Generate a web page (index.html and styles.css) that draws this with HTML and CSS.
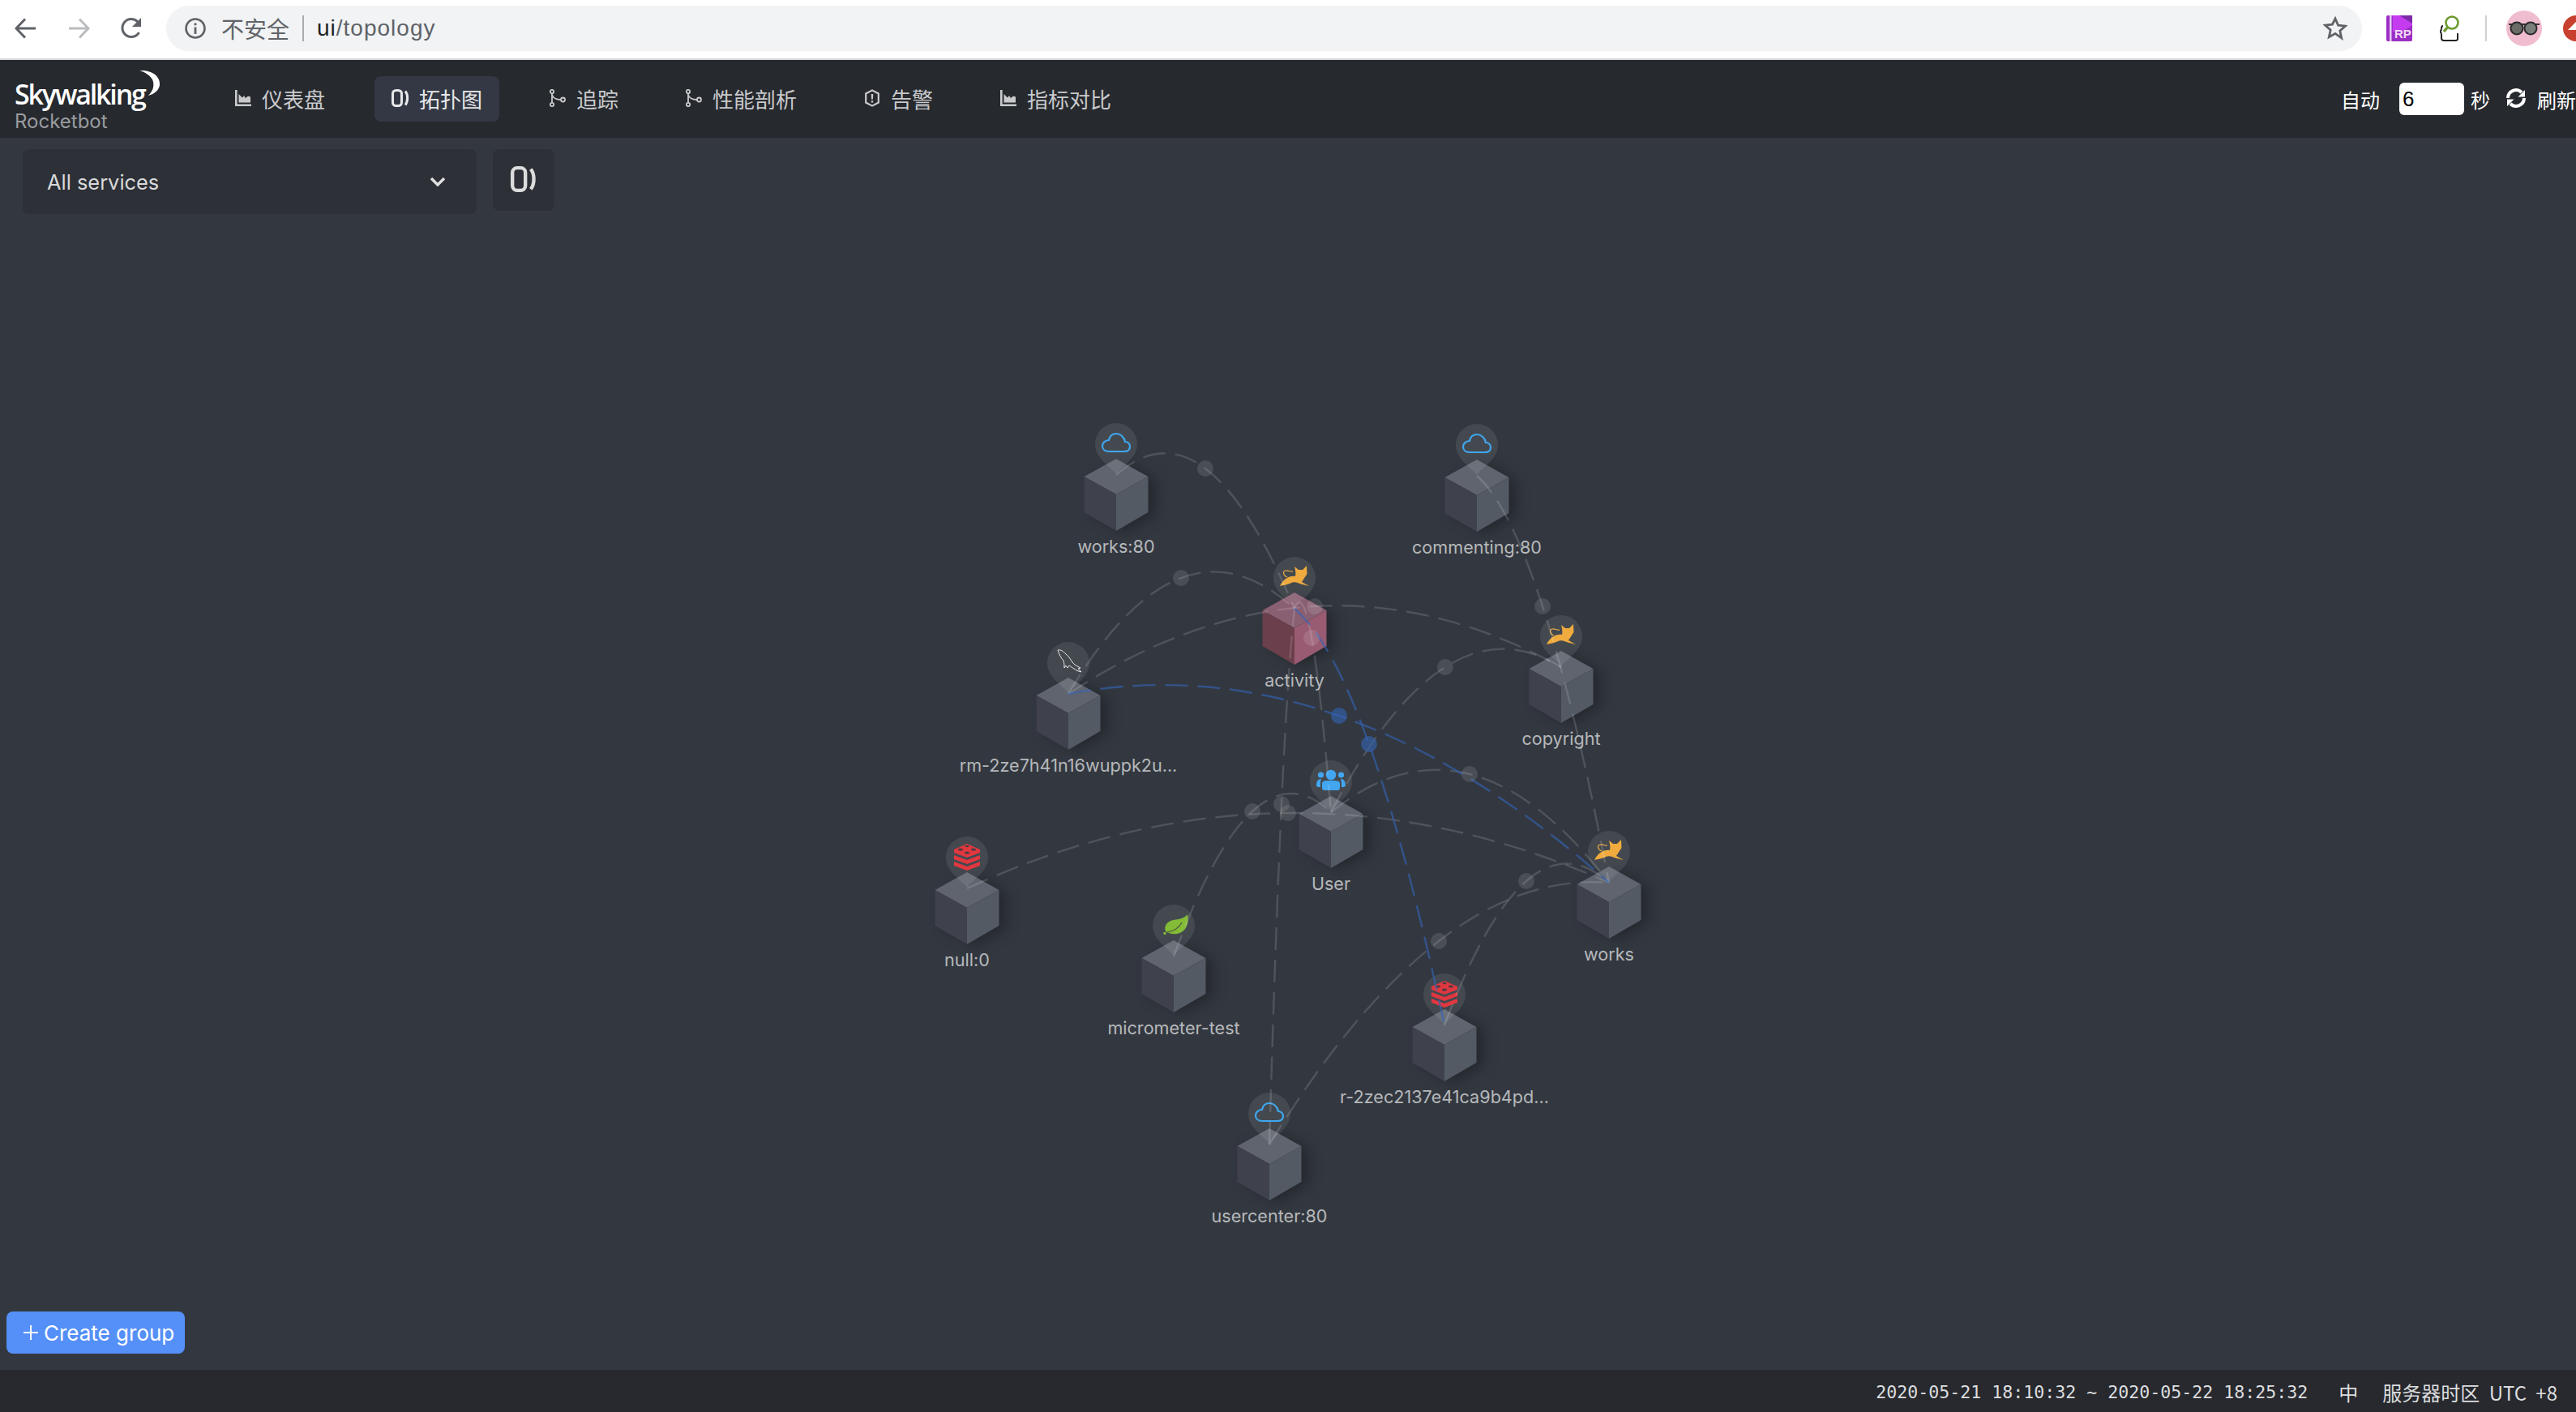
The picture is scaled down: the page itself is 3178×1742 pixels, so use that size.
FILE: index.html
```html
<!DOCTYPE html>
<html lang="zh">
<head>
<meta charset="utf-8">
<title>Rocketbot topology</title>
<link rel="stylesheet" href="styles.css">
</head>
<body>
<div class="browser">
  <svg class="tool" viewBox="0 0 28 28"><path class="tool-line" d="M26 14H3M13 2.5 2 14l11 11.5"/></svg>
  <svg class="tool" viewBox="0 0 28 28"><path class="tool-line tool-off" d="M2 14h23M15 2.5 26 14 15 25.5"/></svg>
  <svg class="tool" viewBox="0 0 28 28"><path class="tool-line" d="M23.5 19A11 11 0 1 1 22 6"/><path class="tool-fill" d="M26 1v11H15z"/></svg>
  <div class="omnibox">
    <svg class="info" viewBox="0 0 26 26"><circle class="info-ring" cx="13" cy="13" r="11.5"/><path class="tool-fill" d="M11.6 6.5h2.8v2.8h-2.8zM11.6 11.5h2.8v8.5h-2.8z"/></svg>
    <span class="insecure">不安全</span>
    <span class="url-sep"></span>
    <span class="url"><b class="url-host">ui</b>/topology</span>
    <svg class="star" viewBox="0 0 30 30"><path class="star-line" d="m15 3 3.6 8.2 8.9.9-6.7 5.9 1.9 8.8L15 21.3l-7.7 4.5 1.9-8.8-6.7-5.9 8.9-.9z"/></svg>
  </div>
  <svg class="ext-rp" viewBox="0 0 32 32"><rect width="32" height="32" rx="2" fill="#9b2fc4"/><path d="M8 0h24v12L20 20H8z" fill="#c53cf0"/><path d="M16 0h16v10z" fill="#7d2aa8"/><rect x="4" width="2.5" height="32" fill="#e9c8f3"/><text class="rp-text" x="10" y="28">RP</text></svg>
  <svg class="ext-find" viewBox="0 0 24 32"><path d="M4 13Q2 13 2 16t-2 4q2 1 2 4v4q0 3 3 3h14q3 0 3-2v-7" fill="none" stroke="#222" stroke-width="2"/><circle cx="15" cy="9" r="7.5" fill="#fff" stroke="#6c9a2e" stroke-width="2.6"/><path d="M10 14 5 20" stroke="#6c9a2e" stroke-width="3.4"/></svg>
  <span class="ext-sep"></span>
  <svg class="avatar" viewBox="0 0 44 44"><circle cx="22" cy="22" r="22" fill="#f0bcd0"/><path d="M3 17h38" stroke="#333" stroke-width="2"/><circle cx="13" cy="22" r="7.5" fill="#6b6b68" stroke="#2b2b2b" stroke-width="2"/><circle cx="30" cy="22" r="7.5" fill="#7b7f7c" stroke="#2b2b2b" stroke-width="2"/></svg>
  <svg class="ext-red" viewBox="0 0 16 32"><circle cx="16" cy="16" r="16" fill="#c8402f"/><path d="M6 18 16 8v10z" fill="#fff"/></svg>
</div>

<header class="topbar">
  <div class="logo">
    <div class="logo-mark"><span class="logo-name">Skywalking</span>
      <svg class="logo-moon" viewBox="0 0 30 32"><path d="M4 1C18 0 30 7 29 19 28 25 23 30 15 32 21 26 23 19 20 12 17 7 11 3 4 1z"/></svg>
    </div>
    <div class="logo-sub">Rocketbot</div>
  </div>
  <nav class="nav">
    <a class="nav-item"><svg class="nav-icon" viewBox="0 0 20 20"><path d="M0 0h2.6v17.4H20V20H0z"/><path d="M4.5 15.5V5L9 9.5l2-2.5 2 3 3-2.5 3 1v7z"/></svg>仪表盘</a>
    <a class="nav-item nav-active"><svg class="nav-icon nav-icon-wide" viewBox="0 0 22 22"><rect class="topo-box" x="1.5" y="1.5" width="11" height="19" rx="4"/><path class="topo-arc" d="M17 2.5c3.500 4 3.500 13 0 17"/></svg>拓扑图</a>
    <a class="nav-item"><svg class="nav-icon" viewBox="0 0 20 22"><g class="trace"><circle cx="3" cy="3" r="2.2"/><circle cx="3" cy="19" r="2.2"/><circle cx="16.5" cy="13" r="2.5"/><path d="M3 5.200V16.800M3 7c1 4 6 6 11 6"/></g></svg>追踪</a>
    <a class="nav-item"><svg class="nav-icon" viewBox="0 0 20 22"><g class="trace"><circle cx="3" cy="3" r="2.2"/><circle cx="3" cy="19" r="2.2"/><circle cx="16.500" cy="13" r="2.5"/><path d="M3 5.200V16.800M3 7c1 4 6 6 11 6"/></g></svg>性能剖析</a>
    <a class="nav-item"><svg class="nav-icon" viewBox="0 0 20 24"><path class="alert" d="M10 1.500 18.500 6v12L10 22.500 1.500 18V6z"/><path d="M8.600 6.500h2.800l-.4 7H9zM8.700 15.500h2.600v2.600H8.700z"/></svg>告警</a>
    <a class="nav-item"><svg class="nav-icon" viewBox="0 0 20 20"><path d="M0 0h2.600v17.400H20V20H0z"/><path d="M4.500 15.500V5L9 9.500l2-2.500 2 3 3-2.500 3 1v7z"/></svg>指标对比</a>
  </nav>
  <div class="controls">
    <span>自动</span>
    <span class="seconds">6</span>
    <span class="sec-unit">秒</span>
    <svg class="refresh" viewBox="0 0 28 26"><path class="refresh-arc" d="M4 13A10 10 0 0 1 21 6M24 13A10 10 0 0 1 7 20"/><path d="M25 3v8.500h-8.500zM3 23v-8.500h8.500z" fill="#fff"/></svg>
    <span>刷新</span>
  </div>
</header>

<main class="stage">
  <svg class="graph" viewBox="0 170 3178 1520">
    <defs>
      <g id="cube">
        <g class="cube-shape">
          <path class="face-top" d="M0 0 39.500 22 0 44-39.500 22z"/>
          <path class="face-left" d="M-39.500 22 0 44v45L-39.500 66z"/>
          <path class="face-right" d="M39.500 22 0 44v45L39.500 66z"/>
        </g>
      </g>
      <g id="cube-alert">
        <g class="cube-shape">
          <path class="face-top-a" d="M0 0 39.500 22 0 44-39.500 22z"/>
          <path class="face-left-a" d="M-39.500 22 0 44v45L-39.500 66z"/>
          <path class="face-right-a" d="M39.500 22 0 44v45L39.500 66z"/>
        </g>
      </g>
      <path id="pin" class="pin" d="M0 19C-6 10-26 0-26-18A26 26 0 1 1 26-18C26 0 6 10 0 19z"/>
      <path id="i-cloud" class="ic-cloud" d="M-9 9H10C15 9 17 6 17 3 17-1 14-3 11-3 10-9 5-13 0-13-5-13-8-10-9-5-14-5-17-1-17 2-17 6-14 9-9 9z"/>
      <g id="i-tomcat">
        <path class="ic-tomcat" d="M0-14 5-10 10-10 15-15 15.500-5 9 5 18 10 8 7.500C3 5-1 4-6 7-10 8.500-14 9-18 10-14 2-7-3 1-2 2-6 1-10 0-14z"/>
        <path class="ic-tail" d="M-9-1C-14-3-15-8-11-9-8-10-5-7-2-8"/>
      </g>
      <path id="i-mysql" class="ic-mysql" d="M-13-16C-9-17-6-14-3-11 1-8 3-4 5-1 7 2 11 4 15 6L12 7 16 11 11 9.500C7 7 4 5 1 3 0 4 0 5-1 6L-3 3-5 6C-5 3-5 0-6-3-9-6-11-10-13-16z"/>
      <g id="i-redis">
        <path class="ic-redis" d="M-16-10 0-17 16-10V-6L0 0-16-6zM-16-3 0 3 16-3V2L0 8-16 2zM-16 5 0 11 16 5V10L0 16-16 10z"/>
        <ellipse class="ic-hole" cx="0" cy="-14" rx="2.500" ry="1.300"/>
        <ellipse class="ic-hole" cx="-8" cy="-10" rx="3" ry="1.500"/>
        <ellipse class="ic-hole" cx="8" cy="-10" rx="3" ry="1.500"/>
        <ellipse class="ic-hole" cx="0" cy="-6" rx="3" ry="1.500"/>
      </g>
      <g id="i-leaf">
        <path class="ic-leaf" d="M17-14C19-4 16 8 4 10-2 11-7 9-10 7-13 0-7-6 0-7 7-8 13-9 17-14z"/>
        <path class="ic-vein" d="M-9 8.500C-1 7 6 4 10-4"/>
        <circle class="ic-leaf" cx="-11" cy="9.500" r="1.700"/>
      </g>
      <g id="i-users" class="ic-users">
        <circle cx="0" cy="-8" r="6.300"/>
        <circle cx="-12.500" cy="-8" r="3.600"/>
        <circle cx="12.500" cy="-8" r="3.600"/>
        <path d="M-11 8C-11 6-11 4-11 3-11-1-7-1 0-1 7-1 11-1 11 3 11 4 11 6 11 8 11 10 10 11 8 11H-8C-10 11-11 10-11 8z"/>
        <path d="M-18 5C-18-1-15-3-12-3-12.500-2-13 0-13 3V7C-15 7-18 7-18 5zM18 5C18-1 15-3 12-3 12.500-2 13 0 13 3V7C15 7 18 7 18 5z"/>
      </g>
    </defs>

    <g transform="translate(1377 566)"><use href="#cube"/><use href="#pin"/><use href="#i-cloud" y="-18"/><text class="node-label" y="116">works:80</text></g>
    <g transform="translate(1822 567)"><use href="#cube"/><use href="#pin"/><use href="#i-cloud" y="-18"/><text class="node-label" y="116">commenting:80</text></g>
    <g transform="translate(1597 731)"><use href="#cube-alert"/><use href="#pin"/><use href="#i-tomcat" y="-18"/><text class="node-label" y="116">activity</text></g>
    <g transform="translate(1926 803)"><use href="#cube"/><use href="#pin"/><use href="#i-tomcat" y="-18"/><text class="node-label" y="116">copyright</text></g>
    <g transform="translate(1318 836)"><use href="#cube"/><use href="#pin"/><use href="#i-mysql" y="-18"/><text class="node-label" y="116">rm-2ze7h41n16wuppk2u...</text></g>
    <g transform="translate(1642 982)"><use href="#cube"/><use href="#pin"/><use href="#i-users" y="-18"/><text class="node-label" y="116">User</text></g>
    <g transform="translate(1985 1069)"><use href="#cube"/><use href="#pin"/><use href="#i-tomcat" y="-18"/><text class="node-label" y="116">works</text></g>
    <g transform="translate(1193 1076)"><use href="#cube"/><use href="#pin"/><use href="#i-redis" y="-18"/><text class="node-label" y="116">null:0</text></g>
    <g transform="translate(1448 1160)"><use href="#cube"/><use href="#pin"/><use href="#i-leaf" y="-18"/><text class="node-label" y="116">micrometer-test</text></g>
    <g transform="translate(1782 1245)"><use href="#cube"/><use href="#pin"/><use href="#i-redis" y="-18"/><text class="node-label" y="116">r-2zec2137e41ca9b4pd...</text></g>
    <g transform="translate(1566 1392)"><use href="#cube"/><use href="#pin"/><use href="#i-cloud" y="-18"/><text class="node-label" y="116">usercenter:80</text></g>

    <path class="edge" d="M1377 586Q1487 487.500 1597 751"/>
    <path class="edge" d="M1318 856Q1456.500 622.500 1597 751"/>
    <path class="edge" d="M1318 856Q1622 656.500 1926 823"/>
    <path class="edge" d="M1822 587Q1902.500 658 1985 1089"/>
    <path class="edge" d="M1642 1002Q1782 733.500 1926 823"/>
    <path class="edge" d="M1642 1002Q1812.500 864.500 1985 1089"/>
    <path class="edge" d="M1193 1096Q1589 913.500 1985 1089"/>
    <path class="edge" d="M1448 1180Q1545 911 1642 1002"/>
    <path class="edge" d="M1566 1412Q1580.500 902.500 1597 751"/>
    <path class="edge" d="M1597 751Q1617 698 1642 1002"/>
    <path class="edge" d="M1566 1412Q1774.500 1071.500 1985 1089"/>
    <path class="edge" d="M1782 1265Q1882.500 997 1985 1089"/>
    <path class="edge edge-blue" d="M1318 856Q1652 793.500 1985 1089"/>
    <path class="edge edge-blue" d="M1597 751Q1688.500 828 1782 1265"/>

    <circle class="anchor" cx="1487" cy="578" r="10"/>
    <circle class="anchor" cx="1457" cy="713" r="10"/>
    <circle class="anchor" cx="1622" cy="748" r="10"/>
    <circle class="anchor" cx="1903" cy="748" r="10"/>
    <circle class="anchor" cx="1783" cy="823" r="10"/>
    <circle class="anchor" cx="1813" cy="955" r="10"/>
    <circle class="anchor" cx="1589" cy="1003" r="10"/>
    <circle class="anchor" cx="1545" cy="1001" r="10"/>
    <circle class="anchor" cx="1581" cy="992" r="10"/>
    <circle class="anchor" cx="1618" cy="787" r="10"/>
    <circle class="anchor" cx="1775" cy="1161" r="10"/>
    <circle class="anchor" cx="1883" cy="1087" r="10"/>
    <circle class="anchor anchor-blue" cx="1652" cy="883" r="10"/>
    <circle class="anchor anchor-blue" cx="1689" cy="918" r="10"/>
  </svg>

  <div class="toolbar">
    <div class="select"><span>All services</span><svg class="chevron" viewBox="0 0 20 12"><path d="M2 2l8 8 8-8"/></svg></div>
    <button class="icon-btn"><svg class="icon-big" viewBox="0 0 22 22"><rect class="topo-box" x="1.500" y="1.500" width="11" height="19" rx="4"/><path class="topo-arc" d="M17 2.500c3.500 4 3.500 13 0 17"/></svg></button>
  </div>
  <button class="create"><svg class="plus" viewBox="0 0 18 18"><path d="M9 0v18M0 9h18"/></svg>Create group</button>
</main>

<footer class="footer">
  <span class="range">2020-05-21 18:10:32 ~ 2020-05-22 18:25:32</span>
  <span class="lang">中</span>
  <span class="zone">服务器时区 UTC +8</span>
</footer>
</body>
</html>
```
FILE: styles.css
```css
* { box-sizing: border-box; }
html, body { margin: 0; height: 100%; }
body {
  width: 3178px;
  height: 1742px;
  overflow: hidden;
  display: flex;
  flex-direction: column;
  background: #333840;
  font-family: Inter, "Noto Sans CJK SC", sans-serif;
}

/* browser chrome */
.browser {
  flex: none;
  height: 74px;
  display: flex;
  align-items: center;
  padding: 0 0 2px 18px;
  background: #fff;
  border-bottom: 2px solid #d6d8da;
}
.tool { width: 28px; height: 28px; flex: none; margin-right: 37px; }
.tool:nth-child(3) { margin-right: 29px; }
.tool-line { fill: none; stroke: #5f6368; stroke-width: 3; }
.tool-off { stroke: #babcbe; }
.tool-fill { fill: #5f6368; }
.omnibox {
  flex: 1;
  height: 56px;
  display: flex;
  align-items: center;
  padding: 0 18px 0 23px;
  border-radius: 28px;
  background: #f1f3f4;
}
.info { width: 26px; height: 26px; margin-right: 19px; }
.info-ring { fill: none; stroke: #5f6368; stroke-width: 2.6; }
.insecure { font-size: 28px; color: #5f6368; font-family: "Noto Sans CJK SC", sans-serif; }
.url-sep { width: 2px; height: 32px; margin: 0 16px 0 16px; background: #a9abad; }
.url { font-size: 28px; color: #5f6368; font-family: "Liberation Sans", sans-serif; letter-spacing: 1px; }
.url-host { font-weight: 400; color: #202124; }
.star { width: 30px; height: 30px; margin-left: auto; }
.star-line { fill: none; stroke: #5f6368; stroke-width: 2.800; }
.ext-rp { width: 32px; height: 32px; flex: none; margin-left: 30px; }
.rp-text { font: 700 15px "Liberation Sans", sans-serif; fill: #f3d9f8; }
.ext-find { width: 24px; height: 32px; flex: none; margin-left: 34px; }
.ext-sep { width: 2px; height: 32px; flex: none; margin-left: 32px; background: #cfd1d3; }
.avatar { width: 44px; height: 44px; flex: none; margin-left: 24px; }
.ext-red { width: 16px; height: 32px; flex: none; margin-left: 26px; }

/* app header */
.topbar {
  flex: none;
  height: 96px;
  display: flex;
  align-items: center;
  background: #26292e;
  color: #c9cacc;
}
.logo { flex: none; width: 268px; padding: 13px 0 0 18px; }
.logo-mark { display: flex; align-items: flex-start; height: 42px; }
.logo-name {
  font: 600 34px/42px "Open Sans", sans-serif;
  color: #fff;
  letter-spacing: -2.200px;
}
.logo-moon { width: 30px; height: 32px; flex: none; margin: -9px 0 0 -11px; fill: #fff; }
.logo-sub { font-size: 24px; line-height: 26px; color: #9a9ca0; }
.nav { display: flex; gap: 40px; }
.nav-item {
  display: flex;
  align-items: center;
  gap: 13px;
  height: 56px;
  padding: 0 21px 2px 22px;
  border-radius: 8px;
  font: 26px "Noto Sans CJK SC", sans-serif;
}
.nav-active { background: #333844; color: #e6e7e8; }
.nav-icon { width: 20px; height: 22px; fill: currentColor; }
.nav-icon-wide { width: 22px; margin: 0 -1px 0 -1px; }
.topo-box, .topo-arc { fill: none; stroke: currentColor; stroke-width: 3; }
.trace { fill: none; stroke: currentColor; stroke-width: 1.800; }
.alert { fill: none; stroke: currentColor; stroke-width: 2.400; }
.controls {
  flex: none;
  display: flex;
  align-items: center;
  margin-left: auto;
  font: 24px "Noto Sans CJK SC", sans-serif;
  color: #fff;
}
.seconds {
  width: 80px;
  height: 40px;
  margin: 0 8px 0 24px;
  padding-left: 4px;
  border-radius: 6px;
  background: #fff;
  color: #000;
  font: 26px/40px "Liberation Sans", sans-serif;
}
.refresh { width: 28px; height: 26px; margin: 0 12px 2px 18px; }
.refresh-arc { fill: none; stroke: #fff; stroke-width: 4; }

/* stage */
.stage {
  flex: 1;
  position: relative;
  display: flex;
  flex-direction: column;
  align-items: flex-start;
  background: #333840;
}
.graph { position: absolute; left: 0; top: 0; width: 3178px; height: 1520px; }
.toolbar { position: relative; display: flex; gap: 20px; align-items: flex-start; padding: 14px 0 0 28px; }
.select {
  width: 560px;
  height: 80px;
  display: flex;
  align-items: center;
  justify-content: space-between;
  padding: 0 38px 0 30px;
  border-radius: 8px;
  background: #2d3037;
  color: #d8d9da;
  font-size: 25.400px;
}
.chevron { width: 20px; height: 12px; fill: none; stroke: #e0e0e0; stroke-width: 3.400; }
.icon-btn {
  width: 76px;
  height: 76px;
  display: flex;
  align-items: center;
  justify-content: center;
  padding: 0;
  border: 0;
  border-radius: 8px;
  background: #2d3037;
  color: #dcdcdc;
}
.icon-big { width: 32px; height: 32px; margin-bottom: 2px; }
.create {
  position: relative;
  width: 220px;
  height: 52px;
  margin: auto 0 20px 8px;
  display: flex;
  align-items: center;
  gap: 7px;
  padding: 0 0 0 21px;
  border: 0;
  border-radius: 8px;
  background: #5590f8;
  color: #fff;
  font: 26px Inter, sans-serif;
}
.plus { width: 18px; height: 18px; flex: none; fill: none; stroke: #fff; stroke-width: 2; }

/* graph */
.cube-shape { filter: drop-shadow(10px 3px 8px rgba(0, 0, 0, .28)); }
.face-top { fill: #5f646e; }
.face-left { fill: #3f414c; }
.face-right { fill: #535a64; }
.face-top-a { fill: #895f72; }
.face-left-a { fill: #6c3f4c; }
.face-right-a { fill: #985b72; }
.pin { fill: rgba(255, 255, 255, .085); }
.node-label { font: 21.600px Inter, sans-serif; fill: #b6b8bb; text-anchor: middle; }
.edge { fill: none; stroke: rgba(255, 255, 255, .14); stroke-width: 2.400; stroke-dasharray: 28 12; }
.edge-blue { stroke: rgba(52, 100, 185, .62); }
.anchor { fill: rgba(255, 255, 255, .115); }
.anchor-blue { fill: rgba(52, 100, 180, .6); }
.ic-cloud { fill: none; stroke: #3fa7ee; stroke-width: 2.200; }
.ic-tomcat { fill: #efab3e; }
.ic-tail { fill: none; stroke: #efab3e; stroke-width: 1.200; }
.ic-mysql { fill: none; stroke: #e8e8e8; stroke-width: 1; }
.ic-redis { fill: #e1373f; }
.ic-hole { fill: #4a3c44; }
.ic-leaf { fill: #84bb37; }
.ic-vein { fill: none; stroke: #4a5a3c; stroke-width: 1.200; }
.ic-users { fill: #42a6f0; }

/* footer */
.footer {
  flex: none;
  height: 52px;
  display: flex;
  align-items: center;
  justify-content: flex-end;
  padding: 2px 23px 0 0;
  background: #27292e;
  color: #dcdddf;
  font: 24px "Noto Sans CJK SC", sans-serif;
}
.range { font: 21.600px "DejaVu Sans Mono", monospace; margin-right: 38px; }
.lang { margin-right: 30px; }
.zone { word-spacing: 6px; }
```
